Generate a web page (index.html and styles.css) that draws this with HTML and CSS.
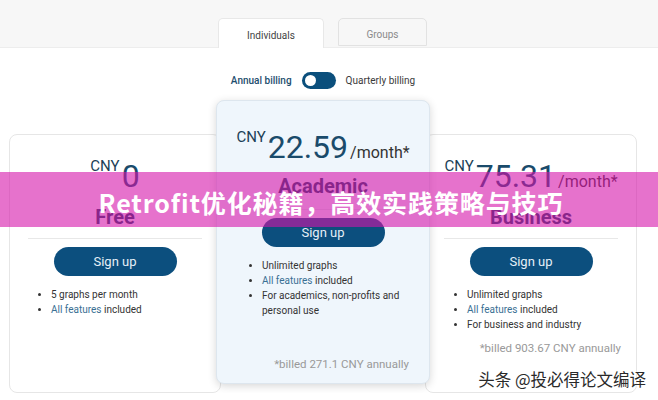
FILE: index.html
```html
<!DOCTYPE html>
<html>

<head>
  <meta charset="UTF-8">
  <title>Pricing</title>
  <link rel="stylesheet" href="styles.css">
</head>

<body>
  <div class="tabs-bar">
    <div class="tab tab-active">Individuals</div>
    <div class="tab">Groups</div>
  </div>

  <div class="billing">
    <span class="billing-label billing-on">Annual billing</span>
    <span class="switch"><span class="knob"></span></span>
    <span class="billing-label">Quarterly billing</span>
  </div>

  <div class="plans">
    <div class="plan plan-side">
      <div class="price"><span class="currency">CNY</span><span class="amount">0</span></div>
      <div class="plan-name">Free</div>
      <div class="divider"></div>
      <div class="signup">Sign up</div>
      <ul class="features">
        <li>5 graphs per month</li>
        <li><span class="link">All features</span> included</li>
      </ul>
    </div>

    <div class="plan plan-featured">
      <div class="price"><span class="currency">CNY</span><span class="amount">22.59</span><span class="period">/month*</span></div>
      <div class="plan-name">Academic</div>
      <div class="divider"></div>
      <div class="signup">Sign up</div>
      <ul class="features">
        <li>Unlimited graphs</li>
        <li><span class="link">All features</span> included</li>
        <li>For academics, non-profits and personal use</li>
      </ul>
      <div class="billed">*billed 271.1 CNY annually</div>
    </div>

    <div class="plan plan-side">
      <div class="price"><span class="currency">CNY</span><span class="amount">75.31</span><span class="period">/month*</span></div>
      <div class="plan-name">Business</div>
      <div class="divider"></div>
      <div class="signup">Sign up</div>
      <ul class="features">
        <li>Unlimited graphs</li>
        <li><span class="link">All features</span> included</li>
        <li>For business and industry</li>
      </ul>
      <div class="billed billed-after">*billed 903.67 CNY annually</div>
    </div>
  </div>

  <div class="banner">Retrofit优化秘籍，高效实践策略与技巧</div>
  <div class="watermark">头条 @投必得论文编译</div>
</body>

</html>
```

FILE: styles.css
```css
body {
  margin: 0;
  background-color: white;
  font-family: Roboto, "Noto Sans", Arial, sans-serif;
  color: #333;
}

.tabs-bar {
  height: 48px;
  box-sizing: border-box;
  background-color: #f7f7f7;
  border-bottom: 1px solid #ededed;
  display: flex;
  justify-content: center;
  align-items: flex-end;
  gap: 14px;
  padding-right: 13px;
}

.tab {
  width: 89px;
  height: 28px;
  box-sizing: border-box;
  margin-bottom: 1px;
  padding-top: 3px;
  background-color: #f7f7f7;
  border: 1px solid #e2e2e2;
  border-radius: 5px 5px 0 0;
  color: #8a8a8a;
  font-size: 10px;
  line-height: 26px;
  text-align: center;
}

.tab-active {
  width: 106px;
  height: 30px;
  margin-bottom: -1px;
  padding-top: 2px;
  background-color: white;
  border-color: #e8e8e8;
  border-bottom: 0;
  color: #444;
  line-height: 30px;
}

.billing {
  margin-top: 24px;
  height: 17px;
  display: flex;
  justify-content: center;
  align-items: center;
  gap: 10px;
  padding-right: 12px;
  font-size: 10px;
}

.billing-label {
  color: #3a3a3a;
}

.billing-on {
  color: #1d4e6e;
  font-weight: 500;
}

.switch {
  width: 34px;
  height: 17px;
  box-sizing: border-box;
  padding-left: 3px;
  border-radius: 9px;
  background-color: #0b4f7c;
  display: flex;
  align-items: center;
}

.knob {
  width: 11px;
  height: 11px;
  border-radius: 50%;
  background-color: white;
}

.plans {
  margin-top: 11px;
  display: flex;
  align-items: flex-start;
  padding-left: 9px;
}

.plan {
  box-sizing: border-box;
  border-radius: 8px;
  display: flex;
  flex-direction: column;
}

.plan-side {
  width: 212px;
  height: 259px;
  margin-top: 34px;
  padding-top: 23px;
  background-color: white;
  border: 1px solid #e6e6e6;
}

.plan-featured {
  position: relative;
  z-index: 1;
  width: 214px;
  height: 284px;
  margin: 0 -5px;
  padding-top: 28px;
  background-color: #eff6fc;
  border: 1px solid #dde6ee;
  box-shadow: 0 2px 8px rgba(0, 0, 0, 0.16);
}

.price {
  height: 36px;
  line-height: 36px;
  text-align: center;
  white-space: nowrap;
}

.currency {
  vertical-align: top;
  font-size: 15px;
  line-height: 16px;
  color: #203f57;
  margin-right: 2px;
}

.amount {
  font-size: 32px;
  color: #1a4b6b;
}

.period {
  font-size: 16px;
  color: #333;
  margin-left: 2px;
}

.plan-name {
  margin-top: 10px;
  height: 26px;
  line-height: 26px;
  text-align: center;
  font-size: 20px;
  font-weight: bold;
  color: #173f5c;
}

.plan-featured .plan-name {
  margin-top: 8px;
}

.divider {
  margin: 8px 18px 0;
  border-top: 1px solid #e8e8e8;
}

.plan-featured .divider {
  margin-top: 10px;
  border-top-color: #dde4ea;
}

.signup {
  margin: 8px auto 0;
  width: 123px;
  height: 29px;
  border-radius: 15px;
  background-color: #0c4f7e;
  color: #e6eff7;
  font-size: 13px;
  line-height: 29px;
  text-align: center;
}

.features {
  margin: 11px 0 0;
  padding: 0 8px 0 41px;
  font-size: 10px;
  line-height: 15px;
  color: #333;
}

.plan-featured .features {
  padding-left: 45px;
}

.link {
  color: #3a6f93;
}

.billed {
  margin-top: auto;
  padding: 0 20px 11px 0;
  text-align: right;
  font-size: 11.5px;
  line-height: 16px;
  color: #999;
}

.billed-after {
  margin-top: 8px;
  padding-right: 15px;
}

.banner {
  position: absolute;
  z-index: 2;
  top: 172px;
  left: 0;
  right: 0;
  height: 55px;
  box-sizing: border-box;
  padding: 4px 0 0 4px;
  background-color: rgba(214, 20, 170, 0.6);
  display: flex;
  justify-content: center;
  align-items: center;
  color: white;
  font-family: "Noto Sans CJK SC", "Noto Sans", sans-serif;
  font-size: 25px;
  font-weight: bold;
  letter-spacing: 0.9px;
}

.watermark {
  position: absolute;
  z-index: 2;
  top: 369px;
  right: 12px;
  font-family: "Noto Sans CJK SC", sans-serif;
  font-size: 16.5px;
  line-height: 20px;
  color: #2a2a2a;
  text-shadow: 0 0 2px white, 0 0 2px white;
}
```
